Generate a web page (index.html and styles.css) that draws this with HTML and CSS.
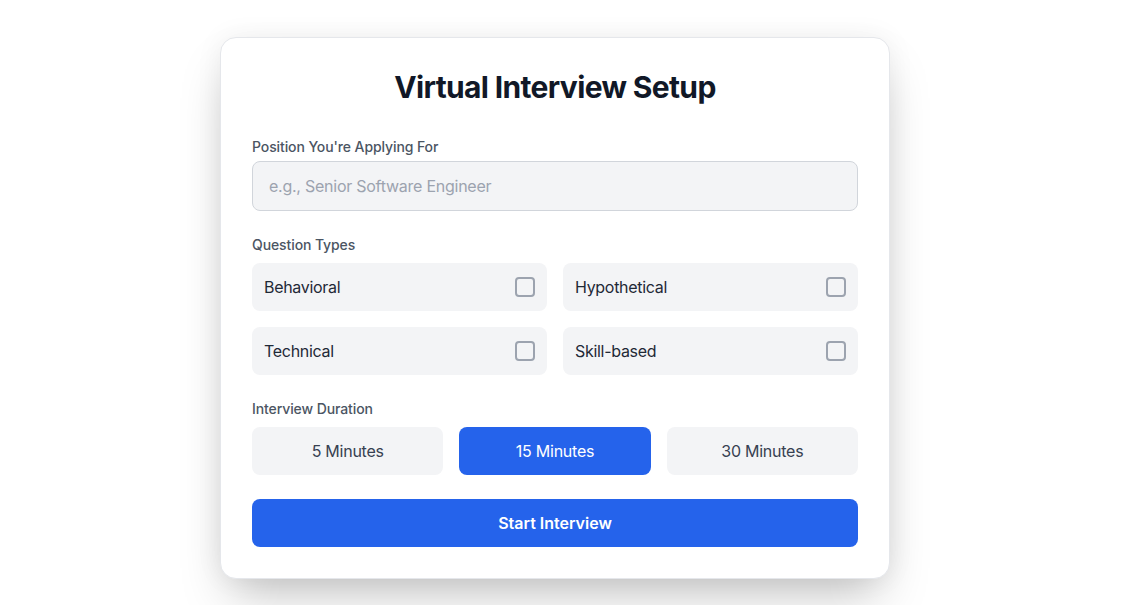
FILE: index.html
```html
<!DOCTYPE html>
<html lang="en">
<head>
<meta charset="utf-8">
<title>Virtual Interview Setup</title>
<link rel="stylesheet" href="styles.css">
</head>
<body>
<main class="page">
  <section class="card">
    <h1 class="title">Virtual Interview Setup</h1>

    <div class="field">
      <label class="label label-tight" for="position">Position You're Applying For</label>
      <input id="position" class="input" type="text" placeholder="e.g., Senior Software Engineer">
    </div>

    <div class="field">
      <div class="label">Question Types</div>
      <div class="types">
        <label class="type"><span>Behavioral</span><input type="checkbox" class="check"></label>
        <label class="type"><span>Hypothetical</span><input type="checkbox" class="check"></label>
        <label class="type"><span>Technical</span><input type="checkbox" class="check"></label>
        <label class="type"><span>Skill-based</span><input type="checkbox" class="check"></label>
      </div>
    </div>

    <div class="field">
      <div class="label">Interview Duration</div>
      <div class="durations">
        <button class="dur" type="button">5 Minutes</button>
        <button class="dur dur-active" type="button">15 Minutes</button>
        <button class="dur" type="button">30 Minutes</button>
      </div>
    </div>

    <button class="start" type="button">Start Interview</button>
  </section>
</main>
</body>
</html>
```

FILE: styles.css
```css
* { box-sizing: border-box; }
html, body { margin: 0; padding: 0; background: #ffffff; }
body {
  font-family: Inter, "Noto Sans", "Liberation Sans", sans-serif;
  color: #111827;
}
.page {
  padding: 37px 0 40px 220px;
}
.card {
  width: 670px;
  background: #fff;
  border: 1px solid #e5e7eb;
  border-radius: 16px;
  padding: 31px 31px 31px;
  box-shadow: 0 25px 50px -12px rgba(0,0,0,0.25), 0 0 28px rgba(0,0,0,0.06);
}
.title {
  margin: 0 0 32px;
  font-size: 30px;
  line-height: 36px;
  font-weight: 700;
  text-align: center;
  color: #111827;
  letter-spacing: -0.65px;
}
.field { margin-bottom: 24px; }
.label {
  display: block;
  font-size: 14px;
  line-height: 20px;
  font-weight: 500;
  color: #4b5563;
  margin-bottom: 8px;
  letter-spacing: -0.1px;
}
.label-tight { margin-bottom: 4px; }
.input {
  display: block;
  width: 100%;
  height: 50px;
  padding: 12px 16px;
  font: inherit;
  font-size: 16px;
  line-height: 24px;
  background: #f3f4f6;
  border: 1px solid #d1d5db;
  border-radius: 8px;
  color: #111827;
  outline: none;
  letter-spacing: -0.25px;
}
.input::placeholder { color: #9ca3af; }
.types {
  display: grid;
  grid-template-columns: 1fr 1fr;
  gap: 16px;
}
.type {
  display: flex;
  align-items: center;
  justify-content: space-between;
  height: 48px;
  padding: 0 12px;
  background: #f3f4f6;
  border-radius: 8px;
  font-size: 16px;
  color: #1f2937;
  cursor: pointer;
  letter-spacing: -0.3px;
}
.check {
  appearance: none;
  -webkit-appearance: none;
  margin: 0;
  width: 20px;
  height: 20px;
  border: 2px solid #9ca3af;
  border-radius: 4px;
  background: #f3f4f6;
}
.durations {
  display: grid;
  grid-template-columns: repeat(3, 1fr);
  gap: 16px;
}
.dur {
  height: 48px;
  border: none;
  border-radius: 8px;
  background: #f3f4f6;
  color: #374151;
  font: inherit;
  font-size: 16px;
  cursor: pointer;
  letter-spacing: -0.25px;
}
.dur-active {
  background: #2563eb;
  color: #fff;
}
.start {
  display: block;
  width: 100%;
  height: 48px;
  border: none;
  border-radius: 8px;
  background: #2563eb;
  color: #fff;
  font: inherit;
  font-size: 16px;
  font-weight: 600;
  cursor: pointer;
}
```
